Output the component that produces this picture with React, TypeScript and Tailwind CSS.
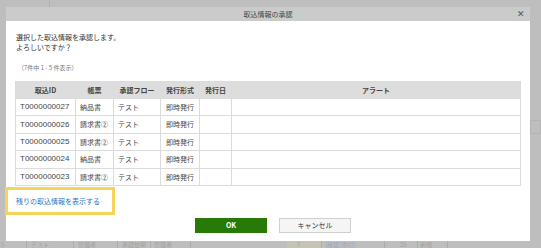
import React from "react";

const rows = [
  { id: "T0000000027", form: "納品書" },
  { id: "T0000000026", form: "請求書②" },
  { id: "T0000000025", form: "請求書②" },
  { id: "T0000000024", form: "納品書" },
  { id: "T0000000023", form: "請求書②" },
];

const font = { fontFamily: '"Noto Sans CJK JP", "Noto Sans", sans-serif' };

export default function App() {
  return (
    <div className="relative w-[541px] h-[248px] overflow-hidden bg-[#bebebe]" style={font}>
      {/* faint page behind overlay */}
      <div className="absolute left-[49px] top-0 h-[7px] w-px bg-[#b2b2b2]" />
      <div className="absolute left-[530px] top-[120px] h-[14px] w-[11px] border border-[#b3b3b3]" />
      <div className="absolute left-[530px] top-[133px] h-px w-[11px] bg-[#b3b3b3]" />
      <div className="absolute left-0 bottom-0 flex h-[7px] w-[541px] items-center text-[6px] leading-[7px] text-[#a2a2a2]">
        <div className="w-[27px] border-r border-[#acacac] pl-[1px]">5</div>
        <div className="w-[47px] border-r border-[#acacac] pl-[4px]">テスト</div>
        <div className="w-[44px] border-r border-[#acacac] pl-[4px]">管理者</div>
        <div className="w-[33px] border-r border-[#acacac] pl-[4px]">承認依頼</div>
        <div className="w-[40px] border-r border-[#acacac] pl-[3px]">管理者</div>
        <div className="w-[96px] border-r border-[#acacac]" />
        <div className="w-[35px] border-r border-[#acacac] pl-[10px] bg-[#c6c3b4]">7</div>
        <div className="w-[63px] border-r border-[#acacac] pl-[3px] text-[#9ea7b8]">(確認/添付)</div>
        <div className="w-[33px] border-r border-[#acacac] pl-[15px]">25</div>
        <div className="w-[30px] border-r border-[#acacac] pl-[2px]">新規</div>
      </div>

      {/* dialog */}
      <div className="absolute left-[6px] top-[7px] flex h-[234px] w-[524px] flex-col bg-white">
        <div className="relative flex h-[14px] shrink-0 items-center justify-center bg-[#c9ccc8] text-[7px] leading-[14px] text-[#444]">
          取込情報の承認
          <span className="absolute right-[5px] top-0 text-[9px] leading-[13px] text-[#555]">✕</span>
        </div>

        <div className="flex flex-col px-[9px] pt-[11px]">
          <div className="pl-[1px] text-[7px] leading-[10px] text-[#333]">
            <div>選択した取込情報を承認します。</div>
            <div>よろしいですか？</div>
          </div>
          <div className="mt-[12px] pl-[3px] text-[6px] leading-[8px] text-[#777]">（7件中 1 - 5 件表示）</div>

          <table className="mt-[9px] w-[506px] border-collapse text-[7px] text-[#444]">
            <thead>
              <tr className="h-[17px] bg-[#dddddd]">
                <th className="w-[60px] border border-[#dcdcdc] font-bold">取込ID</th>
                <th className="w-[38px] border border-[#dcdcdc] font-bold">帳票</th>
                <th className="w-[47px] border border-[#dcdcdc] font-bold">承認フロー</th>
                <th className="w-[39px] border border-[#dcdcdc] font-bold">発行形式</th>
                <th className="w-[32px] border border-[#dcdcdc] font-bold">発行日</th>
                <th className="border border-[#dcdcdc] font-bold">アラート</th>
              </tr>
            </thead>
            <tbody>
              {rows.map((r) => (
                <tr key={r.id} className="h-[17.4px]">
                  <td className="border border-[#dcdcdc] pl-[4px] text-[8px]" style={{ fontFamily: '"Liberation Sans", sans-serif' }}>{r.id}</td>
                  <td className="border border-[#dcdcdc] pl-[4px]">{r.form}</td>
                  <td className="border border-[#dcdcdc] pl-[4px]">テスト</td>
                  <td className="border border-[#dcdcdc] pl-[5px]">即時発行</td>
                  <td className="border border-[#dcdcdc]"></td>
                  <td className="border border-[#dcdcdc]"></td>
                </tr>
              ))}
            </tbody>
          </table>
        </div>

        <div className="relative mt-[1px] h-[28px] px-[10px]">
          <div className="absolute left-[-1px] top-0 h-[28px] w-[110px] border-[3.5px] border-[#f6d35b]" />
          <div className="pt-[9px] text-[7px] leading-[10px] text-[#2f72c4]">残りの取込情報を表示する</div>
        </div>

        <div className="mt-[3px] flex justify-center gap-[12px] pl-[10px]">
          <button className="h-[15px] w-[72px] bg-[#287a07] text-[7px] font-bold text-white">OK</button>
          <button className="h-[15px] w-[72px] border border-[#d0d0d0] bg-[#f5f5f5] text-[7px] text-[#333]">キャンセル</button>
        </div>
      </div>
    </div>
  );
}
